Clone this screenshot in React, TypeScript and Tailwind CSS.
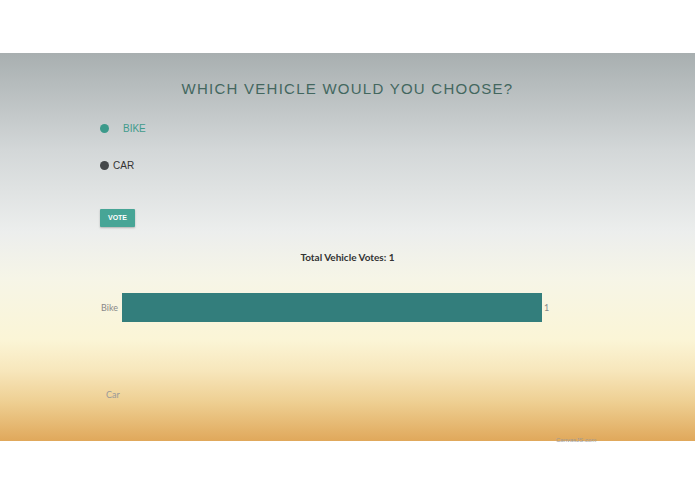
import React from "react";

export default function App() {
  return (
    <div className="w-[695px] h-[494px] bg-white overflow-hidden" style={{ fontFamily: "'Liberation Sans', Arial, sans-serif" }}>
      <div className="h-[53px]" />
      <div className="relative h-[388px] w-full bg-[linear-gradient(to_bottom,#a8afb0_0%,#d3d7d8_25%,#eceeed_46%,#f6f5e7_58%,#fbf5d6_74%,#f7e6bb_82%,#eecf92_90%,#e0a85b_100%)]">
        <div className="pt-[26px] text-center text-[15px] tracking-[1.25px] text-[#43675f] leading-[20px]">
          WHICH VEHICLE WOULD YOU CHOOSE?
        </div>
        <div className="pl-[100px] mt-[22px] flex flex-col">
          <div className="flex items-center h-[14px]">
            <span className="w-[9px] h-[9px] rounded-full bg-[#3c9a8b]" />
            <span className="ml-[14px] text-[10px] text-[#3f9b8c]">BIKE</span>
          </div>
          <div className="flex items-center h-[14px] mt-[23px]">
            <span className="w-[9px] h-[9px] rounded-full bg-[#45484a]" />
            <span className="ml-[4px] text-[10px] text-[#333]">CAR</span>
          </div>
          <div className="mt-[37px]">
            <button className="w-[35px] h-[18px] bg-[#47a596] text-white text-[7px] font-bold rounded-[1px] shadow-[0_1px_2px_rgba(0,0,0,0.25)] flex items-center justify-center">
              VOTE
            </button>
          </div>
        </div>
        <div className="mt-[24px] text-center text-[10px] font-bold text-[#333] leading-[12px]" style={{ fontFamily: "Lato, 'Open Sans', sans-serif" }}>
          Total Vehicle Votes: 1
        </div>
        <div className="mt-[30px] flex items-center" style={{ fontFamily: "Lato, 'Open Sans', sans-serif" }}>
          <span className="w-[120px] pr-[2px] text-right text-[9px] text-[#888]">Bike</span>
          <div className="w-[420px] h-[29px] bg-[#337e7c] ml-[2px]" />
          <span className="ml-[2px] text-[9px] text-[#888]">1</span>
        </div>
        <div className="mt-[66px] pl-[106px] text-[9px] text-[#999]" style={{ fontFamily: "Lato, 'Open Sans', sans-serif" }}>
          Car
        </div>
        <div className="absolute left-[556px] bottom-[-4px] text-[6px] text-[#999]">CanvasJS.com</div>
      </div>
    </div>
  );
}
